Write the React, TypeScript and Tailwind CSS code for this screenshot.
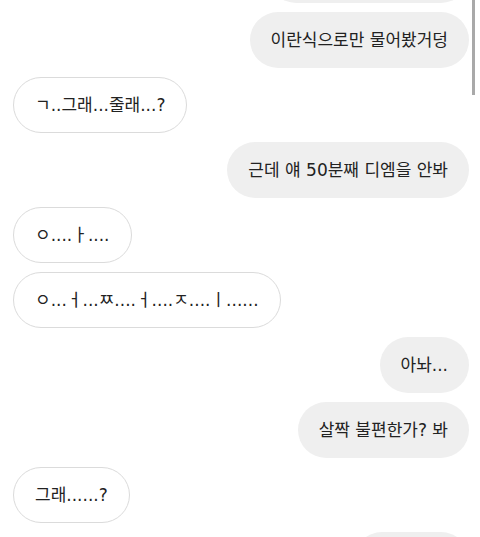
import React from 'react';

type Msg = { id: number; text: string; mine: boolean; w?: string };

// the first and last bubbles are cut off by the viewport, only their shape shows
const messages: Msg[] = [
  { id: 0, text: '', mine: true, w: 'w-[201px]' },
  { id: 1, text: '이란식으로만 물어봤거덩', mine: true },
  { id: 2, text: 'ㄱ..그래...줄래...?', mine: false },
  { id: 3, text: '근데 얘 50분째 디엠을 안봐', mine: true },
  { id: 4, text: 'ㅇ....ㅏ....', mine: false },
  { id: 5, text: 'ㅇ...ㅓ...ㅉ....ㅓ....ㅈ....ㅣ......', mine: false },
  { id: 6, text: '아놔...', mine: true },
  { id: 7, text: '살짝 불편한가? 봐', mine: true },
  { id: 8, text: '그래......?', mine: false },
  { id: 9, text: '', mine: true, w: 'w-[115px]' },
];

const Bubble = ({ msg }: { msg: Msg }) => (
  <div className={`flex ${msg.mine ? 'justify-end' : 'justify-start'}`}>
    <div
      className={`h-14 px-[21px] flex items-center rounded-full whitespace-nowrap text-[17px] leading-[22px] text-[#222] ${
        msg.mine ? 'bg-[#efefef]' : 'bg-white border border-[#dbdbdb]'
      } ${msg.w ?? ''}`}
    >
      {msg.text}
    </div>
  </div>
);

export default function App() {
  return (
    <div
      className="relative w-[480px] h-[537px] overflow-hidden bg-white"
      style={{ fontFamily: '"DejaVu Sans", "Noto Sans CJK KR", sans-serif' }}
    >
      <div className="flex flex-col gap-[9px] pl-[13px] pr-[11px] -mt-[53px]">
        {messages.map(m => (
          <Bubble key={m.id} msg={m} />
        ))}
      </div>

      {/* scroll thumb */}
      <div className="absolute top-0 right-[5px] w-[3px] h-[95px] bg-[#a9a9a9]"></div>
    </div>
  );
}
